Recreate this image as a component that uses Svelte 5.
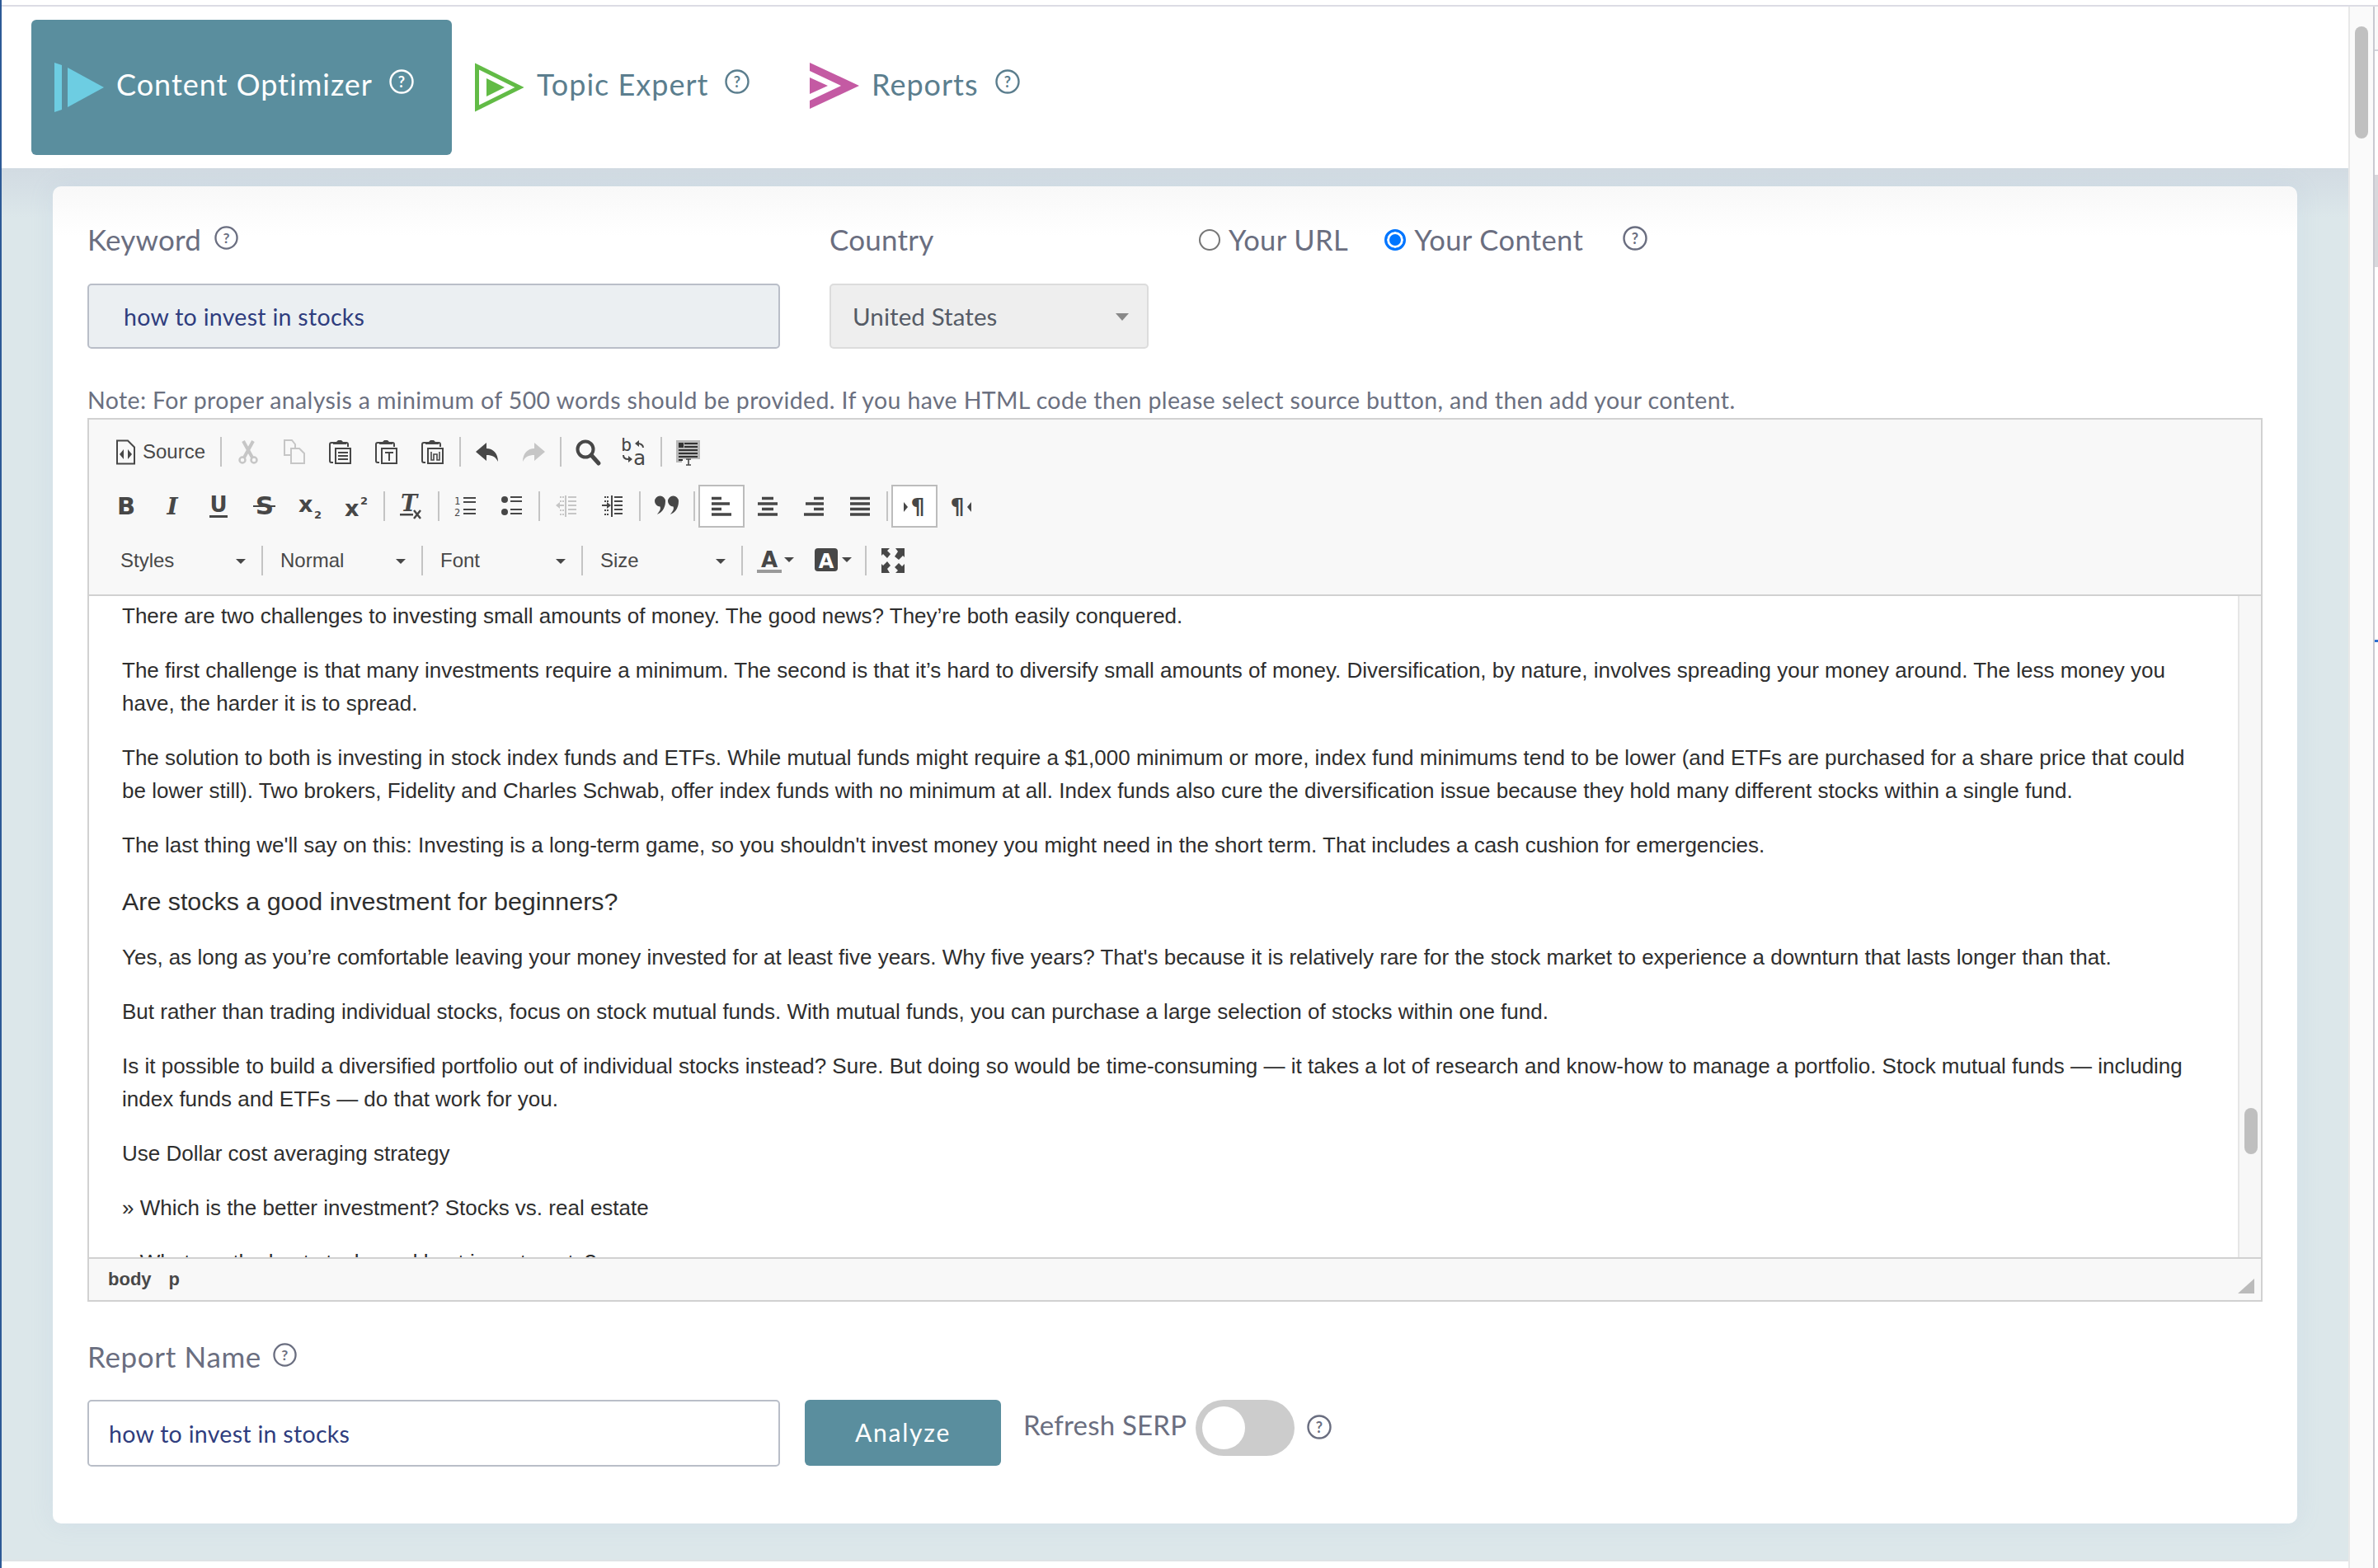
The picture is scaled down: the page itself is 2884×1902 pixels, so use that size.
{#snippet help(cls)}
  <svg class="help {cls}" viewBox="0 0 30 30" aria-hidden="true">
    <circle cx="15" cy="15" r="13.5" fill="none" stroke="currentColor" stroke-width="2.4" />
    <text x="15" y="21.5" text-anchor="middle" font-size="18" font-weight="700" font-family="Lato, sans-serif" fill="currentColor">?</text>
  </svg>
{/snippet}

{#snippet sep()}<span class="sep"></span>{/snippet}

<div class="page">
  <div class="left-line"></div>
  <div class="window">
    <main class="main">
      <header class="tabs">
        <div class="tab active">
          <svg class="tab-icon" viewBox="0 0 60 60"><path d="M0 0l9 3v54l-9 3z" fill="#6dcde2" /><path d="M16 6l44 24-44 24z" fill="#6dcde2" /></svg>
          <span class="tab-text">Content Optimizer</span>
          {@render help('tab-help')}
        </div>
        <div class="tab second">
          <svg class="tab-icon" viewBox="0 0 60 60"><path d="M2.5 4.5L54 30 2.5 55.5z" fill="none" stroke="#62bb46" stroke-width="5" /><path d="M14 19l22 11-22 11z" fill="#62bb46" /></svg>
          <span class="tab-text">Topic Expert</span>
          {@render help('tab-help')}
        </div>
        <div class="tab third">
          <svg class="tab-icon" viewBox="0 0 60 60"><path d="M0 0l60 28-60 28v-10l38-18-38-18z" fill="#c45aa3" /><path d="M0 18l22 10-22 10z" fill="#c45aa3" /></svg>
          <span class="tab-text">Reports</span>
          {@render help('tab-help')}
        </div>
      </header>

      <div class="content-bg">
        <section class="card">
          <div class="top-fields">
            <div class="field keyword">
              <div class="label">Keyword {@render help('label-help')}</div>
              <div class="input filled">how to invest in stocks</div>
            </div>
            <div class="field country">
              <div class="label">Country</div>
              <div class="select">United States<span class="select-arrow"></span></div>
            </div>
            <div class="radios">
              <span class="radio"></span><span class="radio-text url">Your URL</span>
              <span class="radio checked"></span><span class="radio-text">Your Content</span>
              {@render help('radio-help')}
            </div>
          </div>

          <p class="note">Note: For proper analysis a minimum of 500 words should be provided. If you have HTML code then please select source button, and then add your content.</p>

          <div class="editor">
            <div class="toolbar">
              <div class="row">
                <div class="btn source">
                  <svg class="ico" viewBox="0 0 32 32"><path d="M5 2.5h13l8 8v20H5z" fill="none" stroke="#474747" stroke-width="2" /><path d="M13 13l-5 6 5 6zM18 13l5 6-5 6z" fill="#474747" /></svg>
                  <span>Source</span>
                </div>
                {@render sep()}
                <div class="btn off"><svg class="ico" viewBox="0 0 32 32"><g fill="none" stroke="#c6c6c6"><circle cx="9" cy="26" r="3.500" stroke-width="2.500" /><circle cx="23" cy="26" r="3.500" stroke-width="2.500" /><path d="M11 23L22 3M21 23L10 3" stroke-width="4" /></g></svg></div>
                <div class="btn off"><svg class="ico" viewBox="0 0 32 32"><g fill="none" stroke="#c6c6c6" stroke-width="2"><path d="M11 20H4V2h9l4 5v4" /><path d="M12 12h10l6 6v12H12z" /></g></svg></div>
                <div class="btn"><svg class="ico" viewBox="0 0 32 32"><g fill="none" stroke="#474747" stroke-width="2"><path d="M7 5H5a2 2 0 0 0-2 2v20a2 2 0 0 0 2 2h2" /><path d="M21 5h2a2 2 0 0 1 2 2v3" /><rect x="10" y="12" width="18" height="18" /><path d="M13 17h12M13 21h12M13 25h12" /></g><path d="M8 7V4h4l2-2h4l2 2h4v3z" transform="translate(-1 0)" fill="#474747" /></svg></div>
                <div class="btn"><svg class="ico" viewBox="0 0 32 32"><g fill="none" stroke="#474747" stroke-width="2"><path d="M7 5H5a2 2 0 0 0-2 2v20a2 2 0 0 0 2 2h2" /><path d="M21 5h2a2 2 0 0 1 2 2v3" /><rect x="10" y="12" width="18" height="18" /><path d="M14 17h10M19 17v10" /></g><path d="M8 7V4h4l2-2h4l2 2h4v3z" transform="translate(-1 0)" fill="#474747" /></svg></div>
                <div class="btn"><svg class="ico" viewBox="0 0 32 32"><g fill="none" stroke="#474747" stroke-width="2"><path d="M7 5H5a2 2 0 0 0-2 2v20a2 2 0 0 0 2 2h2" /><path d="M21 5h2a2 2 0 0 1 2 2v3" /><rect x="10" y="12" width="18" height="18" /><path d="M14 16v10h3v-7h4v7h3V16" stroke-width="1.600" /></g><path d="M8 7V4h4l2-2h4l2 2h4v3z" transform="translate(-1 0)" fill="#474747" /></svg></div>
                {@render sep()}
                <div class="btn"><svg class="ico" viewBox="0 0 32 32"><path d="M2 16L15 5v7c8 0 14 6 14 16-3-6-7-8-14-8v7z" fill="#474747" /></svg></div>
                <div class="btn"><svg class="ico" viewBox="0 0 32 32"><path d="M30 16L17 5v7C9 12 3 18 3 28c3-6 7-8 14-8v7z" fill="#c6c6c6" /></svg></div>
                {@render sep()}
                <div class="btn"><svg class="ico" viewBox="0 0 32 32"><circle cx="13" cy="13" r="9.500" fill="none" stroke="#474747" stroke-width="4" /><path d="M20 20l9 10" stroke="#474747" stroke-width="5" stroke-linecap="round" /></svg></div>
                <div class="btn"><svg class="ico" viewBox="0 0 32 32"><text x="0" y="15" class="in" font-size="22">b</text><text x="15" y="32" class="in" font-size="25">a</text><g fill="none" stroke="#474747" stroke-width="2"><path d="M27 11c0-3-3-5-6-5" /><path d="M3 20c0 3 2 5 6 5" /></g><path d="M22 2l-5 4 5 4zM9 21l5 4-5 4z" fill="#474747" /></svg></div>
                {@render sep()}
                <div class="btn"><svg class="ico" viewBox="0 0 32 32"><rect x="1" y="2" width="29" height="23" fill="#b8b8b8" /><rect x="1" y="25" width="7" height="4" fill="#b8b8b8" /><rect x="4" y="5" width="6" height="6" fill="#333" /><path d="M11 6h16M11 10h16M4 14h23M4 18h23M4 22h23M4 26h5" stroke="#333" stroke-width="2" /><path d="M13 25h6M16 25v7M13 32h6" stroke="#474747" stroke-width="1.600" /></svg></div>
              </div>

              <div class="row">
                <div class="btn"><svg class="ico" viewBox="0 0 32 32"><text x="16" y="26" text-anchor="middle" class="ib" font-size="29">B</text></svg></div>
                <div class="btn"><svg class="ico" viewBox="0 0 32 32"><text x="16" y="26" text-anchor="middle" class="ii" font-size="28">I</text></svg></div>
                <div class="btn"><svg class="ico" viewBox="0 0 32 32"><text x="16" y="23" text-anchor="middle" class="ib" font-size="26">U</text><rect x="5" y="27" width="22" height="3" fill="#474747" /></svg></div>
                <div class="btn"><svg class="ico" viewBox="0 0 32 32"><text x="16" y="26" text-anchor="middle" class="ib" font-size="31">S</text><rect x="2" y="15" width="27" height="2" fill="#474747" /></svg></div>
                <div class="btn"><svg class="ico" viewBox="0 0 32 32"><text x="1" y="23" class="ib" font-size="27">x</text><text x="20" y="31" class="ib" font-size="13">2</text></svg></div>
                <div class="btn"><svg class="ico" viewBox="0 0 32 32"><text x="1" y="28" class="ib" font-size="27">x</text><text x="20" y="14" class="ib" font-size="13">2</text></svg></div>
                {@render sep()}
                <div class="btn"><svg class="ico" viewBox="0 0 32 32"><text x="13" y="22" text-anchor="middle" class="ii" font-size="27">T</text><rect x="2" y="25" width="16" height="2.500" fill="#474747" /><path d="M19 21l8 10M27 21l-8 10" stroke="#474747" stroke-width="2.500" /></svg></div>
                {@render sep()}
                <div class="btn"><svg class="ico" viewBox="0 0 32 32"><text x="2" y="14" class="in" font-size="12">1</text><text x="2" y="28" class="in" font-size="12">2</text><path d="M13 6h15M13 11h15M13 20h15M13 25h15" stroke="#474747" stroke-width="2.200" /></svg></div>
                <div class="btn"><svg class="ico" viewBox="0 0 32 32"><circle cx="7" cy="8" r="4" fill="#474747" /><circle cx="7" cy="23" r="4" fill="#474747" /><path d="M14 5h14M14 10h14M14 20h14M14 25h14" stroke="#474747" stroke-width="2.200" /></svg></div>
                {@render sep()}
                <div class="btn"><svg class="ico" viewBox="0 0 32 32"><g stroke="#c6c6c6"><path d="M15 3v26" stroke-width="2" /><path d="M18 5h10M18 10h10M18 15h10M18 20h10M18 25h10" stroke-width="2" /><path d="M6 15h7" stroke-width="2" /><path d="M8 5h2M11 5h2M8 10h2M11 10h2M8 21h2M11 21h2M8 26h2M11 26h2" stroke-width="2" /></g><path d="M8 11v8l-5-4z" fill="#c6c6c6" /></svg></div>
                <div class="btn"><svg class="ico" viewBox="0 0 32 32"><g stroke="#474747"><path d="M15 3v26" stroke-width="2" /><path d="M18 5h10M18 10h10M18 15h10M18 20h10M18 25h10" stroke-width="2" /><path d="M3 15h7" stroke-width="2" /><path d="M6 5h2M9 5h2M6 10h2M9 10h2M6 21h2M9 21h2M6 26h2M9 26h2" stroke-width="2" /></g><path d="M9 11v8l5-4z" fill="#474747" /></svg></div>
                {@render sep()}
                <div class="btn"><svg class="ico" viewBox="0 0 32 32"><path d="M1 10a6.500 6.500 0 1 1 13 0c0 9-5 14-10 16 2-3 5-6 3.500-9.500a6.500 6.500 0 0 1-6.500-6.500z" fill="#474747" /><path d="M17 10a6.500 6.500 0 1 1 13 0c0 9-5 14-10 16 2-3 5-6 3.500-9.500a6.500 6.500 0 0 1-6.500-6.500z" fill="#474747" /></svg></div>
                {@render sep()}
                <div class="btn on"><svg class="ico" viewBox="0 0 32 32"><path d="M4 6.500h12M4 13h22M4 19.500h12M4 26h24" stroke="#474747" stroke-width="3.500" /></svg></div>
                <div class="btn"><svg class="ico" viewBox="0 0 32 32"><path d="M9 6.500h14M4 13h24M9 19.500h14M4 26h24" stroke="#474747" stroke-width="3.500" /></svg></div>
                <div class="btn"><svg class="ico" viewBox="0 0 32 32"><path d="M16 6.500h12M6 13h22M16 19.500h12M4 26h24" stroke="#474747" stroke-width="3.500" /></svg></div>
                <div class="btn"><svg class="ico" viewBox="0 0 32 32"><path d="M4 6.500h24M4 13h24M4 19.500h24M4 26h24" stroke="#474747" stroke-width="3.500" /></svg></div>
                {@render sep()}
                <div class="btn on"><svg class="ico" viewBox="0 0 32 32"><path d="M3 11v12l5-6z" fill="#474747" /><text x="20" y="26" text-anchor="middle" class="ib" font-size="27">¶</text></svg></div>
                <div class="btn"><svg class="ico" viewBox="0 0 32 32"><path d="M29 11v12l-5-6z" fill="#474747" /><text x="12" y="26" text-anchor="middle" class="ib" font-size="27">¶</text></svg></div>
              </div>

              <div class="row combos">
                <div class="combo"><span>Styles</span><i class="caret"></i></div>
                {@render sep()}
                <div class="combo"><span>Normal</span><i class="caret"></i></div>
                {@render sep()}
                <div class="combo"><span>Font</span><i class="caret"></i></div>
                {@render sep()}
                <div class="combo"><span>Size</span><i class="caret"></i></div>
                {@render sep()}
                <div class="color-btn"><svg class="ico" viewBox="0 0 32 32"><text x="15" y="24" text-anchor="middle" class="ib" font-size="26">A</text><rect x="0" y="27" width="30" height="4" fill="#9a9a9a" /></svg><i class="caret small"></i></div>
                <div class="color-btn"><svg class="ico" viewBox="0 0 32 32"><rect x="0" y="1" width="28" height="28" rx="4" fill="#474747" /><text x="14" y="25" text-anchor="middle" class="ib white" font-size="24">A</text></svg><i class="caret small"></i></div>
                {@render sep()}
                <div class="btn"><svg class="ico" viewBox="0 0 32 32"><path d="M2 1h10l-3 3 4 4-4 5-5-5-2 2zM30 1v11l-2-2-5 5-5-4 4-6-3-4zM2 31V20l2 2 5-5 4 5-4 4 3 5zM30 31H19l3-3-4-4 5-5 4 4 3-3z" fill="#474747" /></svg></div>
              </div>
            </div>

            <div class="editor-main">
              <div class="doc">
                <p>There are two challenges to investing small amounts of money. The good news? They’re both easily conquered.</p>
                <p>The first challenge is that many investments require a minimum. The second is that it’s hard to diversify small amounts of money. Diversification, by nature, involves spreading your money around. The less money you have, the harder it is to spread.</p>
                <p>The solution to both is investing in stock index funds and ETFs. While mutual funds might require a $1,000 minimum or more, index fund minimums tend to be lower (and ETFs are purchased for a share price that could be lower still). Two brokers, Fidelity and Charles Schwab, offer index funds with no minimum at all. Index funds also cure the diversification issue because they hold many different stocks within a single fund.</p>
                <p>The last thing we'll say on this: Investing is a long-term game, so you shouldn't invest money you might need in the short term. That includes a cash cushion for emergencies.</p>
                <h3>Are stocks a good investment for beginners?</h3>
                <p>Yes, as long as you’re comfortable leaving your money invested for at least five years. Why five years? That's because it is relatively rare for the stock market to experience a downturn that lasts longer than that.</p>
                <p>But rather than trading individual stocks, focus on stock mutual funds. With mutual funds, you can purchase a large selection of stocks within one fund.</p>
                <p>Is it possible to build a diversified portfolio out of individual stocks instead? Sure. But doing so would be time-consuming — it takes a lot of research and know-how to manage a portfolio. Stock mutual funds — including index funds and ETFs — do that work for you.</p>
                <p>Use Dollar cost averaging strategy</p>
                <p>» Which is the better investment? Stocks vs. real estate</p>
                <p>» What are the best stocks and best investments?</p>
              </div>
              <div class="doc-scroll"><div class="doc-thumb"></div></div>
            </div>

            <div class="status">
              <b>body</b><b>p</b>
              <span class="resizer"></span>
            </div>
          </div>

          <div class="label report-label">Report Name {@render help('label-help')}</div>
          <div class="report-row">
            <div class="input report">how to invest in stocks</div>
            <div class="analyze">Analyze</div>
            <span class="refresh">Refresh SERP</span>
            <span class="toggle"><span class="knob"></span></span>
            {@render help('refresh-help')}
          </div>
        </section>
      </div>
      <div class="foot"></div>
    </main>
    <div class="page-scroll"><div class="page-thumb"></div></div>
    <div class="edge">
      <div class="edge-a"></div>
      <div class="edge-b"></div>
      <div class="edge-c"></div>
    </div>
  </div>
</div>

<style>
  :global(body) { margin: 0; background: #fff; }
  .page { width: 2884px; height: 1902px; display: flex; overflow: hidden; font-family: Lato, "Noto Sans", sans-serif; }
  .left-line { width: 2px; background: #2d5a96; flex: none; }
  .window { flex: 1; display: flex; border-top: 2px solid #dcdce4; margin-top: 6px; min-width: 0; }
  .main { width: 2846px; flex: none; display: flex; flex-direction: column; }

  .tabs { height: 196px; background: #fff; display: flex; padding: 16px 0 0 36px; box-sizing: border-box; align-items: flex-start; }
  .tab { height: 164px; box-sizing: border-box; display: flex; align-items: center; padding-left: 28px; color: #5b7e8e; }
  .tab.active { width: 510px; background: #5a8e9e; border-radius: 6px; color: #fff; }
  .tab.second { width: 406px; }
  .tab-icon { width: 60px; height: 60px; flex: none; }
  .tab-text { font-size: 36px; letter-spacing: 1px; margin-left: 15px; margin-bottom: 8px; white-space: nowrap; }
  .help { display: block; flex: none; }
  :global(.tab-help) { width: 30px; height: 30px; margin-left: 20px; margin-bottom: 14px; }
  :global(.label-help) { width: 29px; height: 29px; margin-left: 7px; margin-bottom: 3px; }
  :global(.radio-help) { width: 30px; height: 30px; margin-left: 48px; margin-bottom: 4px; }
  :global(.refresh-help) { width: 30px; height: 30px; margin-left: 15px; margin-top: 0; }

  .content-bg { flex: 1; background: linear-gradient(#d2dbe2 0, #d5dfe5 22px, #dce7ea 60px); padding: 22px 62px 44px 62px; display: flex; min-height: 0; }
  .card { flex: 1; background: linear-gradient(#f8f8f8, #fff 60px); border-radius: 10px; padding: 46px 42px 0; box-shadow: 0 0 30px rgba(140, 170, 210, .14); }

  .top-fields { display: flex; align-items: flex-start; }
  .field.keyword { width: 840px; margin-right: 60px; }
  .field.country { width: 387px; }
  .label { display: flex; align-items: center; height: 38px; box-sizing: border-box; padding-bottom: 3px; font-size: 35px; color: #6a6e80; letter-spacing: .2px; white-space: pre; }
  .input { height: 80px; box-sizing: border-box; margin-top: 34px; border: 2px solid #b9bec8; border-radius: 5px; display: flex; align-items: center; font-size: 28.5px; letter-spacing: .3px; color: #2f3d7e; }
  .input.filled { background: #ebeff2; padding-left: 42px; height: 79px; }
  .select { height: 79px; box-sizing: border-box; margin-top: 34px; background: #eee; border: 2px solid #dcdcdc; border-radius: 5px; display: flex; align-items: center; padding-left: 26px; font-size: 29.5px; letter-spacing: .1px; color: #555b66; position: relative; }
  .select-arrow { position: absolute; right: 22px; top: 34px; border: 8px solid transparent; border-top: 9px solid #888; border-bottom: 0; }
  .radios { display: flex; align-items: center; height: 38px; margin-left: 61px; font-size: 34.5px; color: #6a6e80; }
  .radio { width: 26px; height: 26px; box-sizing: border-box; border: 2px solid #767676; border-radius: 50%; flex: none; }
  .radio.checked { border: 3px solid #0075ff; background: #0075ff; box-shadow: inset 0 0 0 3px #fff; }
  .radio-text { margin-left: 10px; letter-spacing: .4px; padding-bottom: 2px; }
  .radio-text.url { margin-right: 44px; }

  .note { height: 38px; line-height: 38px; margin: 43px 0 3px; font-size: 28.5px; color: #6b7080; letter-spacing: .37px; white-space: nowrap; }

  .editor { border: 2px solid #d1d1d1; height: 1072px; box-sizing: border-box; display: flex; flex-direction: column; width: 2638px; }
  .toolbar { height: 214px; box-sizing: border-box; flex: none; background: #f8f8f8; border-bottom: 2px solid #d1d1d1; padding: 13px 0 0 17px; display: flex; flex-direction: column; gap: 14px; }
  .row { display: flex; align-items: center; height: 52px; }
  .btn { width: 56px; height: 52px; box-sizing: border-box; display: flex; align-items: center; justify-content: center; flex: none; border: 2px solid transparent; }
  .btn.on { background: #fff; border-color: #bcbcbc; }
  .btn.source { width: 138px; justify-content: flex-start; padding-left: 10px; font: 24px "Liberation Sans", Arial, sans-serif; color: #484848; }
  .btn.source span { margin-left: 4px; }
  .ico { width: 32px; height: 32px; flex: none; overflow: visible; }
  :global(.ib) { font-family: "DejaVu Sans", sans-serif; font-weight: 700; fill: #474747; }
  :global(.ib.white) { fill: #fff; }
  :global(.ii) { font-family: "DejaVu Serif", serif; font-weight: 700; font-style: italic; fill: #474747; }
  :global(.in) { font-family: "DejaVu Sans Mono", monospace; fill: #474747; }
  .sep { width: 2px; height: 36px; background: #c4c4c4; margin: 0 4px; flex: none; }
  .combos { padding-left: 4px; }
  .combo { width: 184px; height: 52px; flex: none; display: flex; align-items: center; padding-left: 17px; box-sizing: border-box; position: relative; font: 24px "Liberation Sans", Arial, sans-serif; color: #484848; }
  .caret { position: absolute; border: 6px solid transparent; border-top: 6px solid #474747; border-bottom: 0; top: 24px; left: 157px; }
  .color-btn { width: 70px; height: 52px; box-sizing: border-box; flex: none; position: relative; display: flex; align-items: center; padding-left: 13px; }
  .caret.small { left: 46px; top: 22px; }

  .editor-main { height: 802px; flex: none; display: flex; background: #fff; overflow: hidden; }
  .doc { flex: 1; padding: 4px 40px 0; box-sizing: border-box; height: 802px; overflow: hidden; font: 26px/40px "Liberation Sans", Arial, sans-serif; color: #2e2e2e; min-width: 0; }
  .doc p { margin: 0 0 26px; }
  .doc h3 { margin: 0 0 26px; font-size: 30.4px; line-height: 44px; font-weight: 400; }
  .doc-scroll { width: 28px; flex: none; background: #f7f7f7; border-left: 2px solid #e6e6e6; box-sizing: border-box; padding: 621px 0 0 6px; border-right: 0; }
  .doc-thumb { width: 16px; height: 56px; border-radius: 8px; background: #bfbfbf; }

  .status { flex: 1; background: #f8f8f8; border-top: 2px solid #d1d1d1; display: flex; align-items: center; padding-left: 23px; gap: 21px; position: relative; font: 700 22px "Liberation Sans", Arial, sans-serif; color: #484848; }
  .status b { font-weight: 700; }
  .resizer { position: absolute; right: 8px; bottom: 8px; border-bottom: 18px solid #bbb; border-left: 20px solid transparent; }

  .report-label { margin-top: 48px; letter-spacing: .65px; }
  .report-label :global(.label-help) { margin-left: 4px; }
  .report-row { display: flex; align-items: flex-start; margin-top: 33px; }
  .input.report { width: 840px; height: 81px; margin-top: 0; padding-left: 24px; background: #fff; }
  .analyze { width: 238px; height: 80px; margin-left: 30px; background: #5a8e9e; border-radius: 6px; color: #fff; font-size: 30px; letter-spacing: 1.8px; display: flex; align-items: center; justify-content: center; padding-bottom: 2px; box-sizing: border-box; }
  .refresh { margin-left: 27px; height: 62px; line-height: 60px; font-size: 33px; color: #6a6e80; letter-spacing: .2px; white-space: nowrap; }
  .toggle { width: 120px; height: 68px; border-radius: 34px; background: #ccc; margin-left: 11px; flex: none; display: flex; align-items: center; padding-left: 8px; box-sizing: border-box; }
  .knob { width: 52px; height: 52px; border-radius: 50%; background: #fff; }
  .report-row :global(.refresh-help) { margin-top: 18px; color: #6a6e80; }

  .label :global(.help), .radios :global(.help) { color: #6a6e80; }

  .foot { height: 10px; flex: none; background: #fff; border-top: 2px solid #dfe3e6; box-sizing: border-box; }

  .page-scroll { width: 30px; flex: none; background: #fafafa; border-left: 2px solid #e8e8e8; box-sizing: border-box; padding: 24px 0 0 6px; }
  .page-thumb { width: 16px; height: 136px; border-radius: 8px; background: #c0c0c0; }
  .edge { flex: 1; background: #fff; border-left: 2px solid #c9c9d1; position: relative; }
  .edge-a { height: 52px; background: #fafafa; border-bottom: 2px solid #d5d5dc; }
  .edge-b { margin-top: 150px; height: 112px; background: #d8d8dc; }
  .edge-c { position: absolute; top: 768px; left: 0; width: 4px; height: 3px; background: #2d6fd0; }
</style>
